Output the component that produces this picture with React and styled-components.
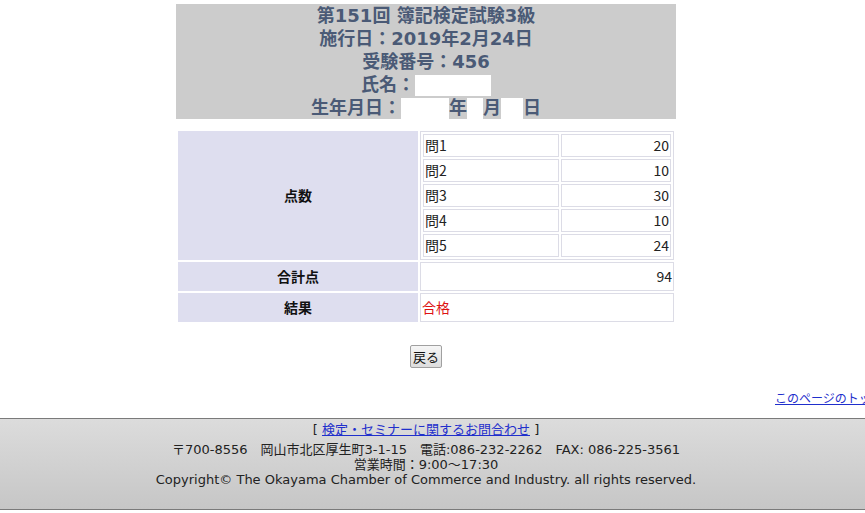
import React from 'react';
import styled, { createGlobalStyle } from 'styled-components';

const GlobalStyle = createGlobalStyle`
  html, body {
    margin: 0;
    padding: 0;
    background: #fff;
    overflow-x: hidden;
  }
  body {
    font-family: "Noto Sans", "Noto Sans CJK JP", sans-serif;
    color: #222;
  }
`;

const scores = [
  { label: '問1', value: 20 },
  { label: '問2', value: 10 },
  { label: '問3', value: 30 },
  { label: '問4', value: 10 },
  { label: '問5', value: 24 },
];

const App = () => {
  const total = scores.reduce((sum, s) => sum + s.value, 0);

  return (
    <>
      <GlobalStyle />
      <Page>
        <Header>
          <HeaderLine>第151回 簿記検定試験3級</HeaderLine>
          <HeaderLine>施行日：2019年2月24日</HeaderLine>
          <HeaderLine>受験番号：456</HeaderLine>
          <HeaderLine>
            氏名：<Blank w={76} />
          </HeaderLine>
          <HeaderLine>
            生年月日：<Blank w={48} />年<Blank w={16} />月<Blank w={22} />日
          </HeaderLine>
        </Header>

        <ResultTable>
          <tbody>
            <tr>
              <LabelCell>点数</LabelCell>
              <ValueCell flush>
                <ScoreTable>
                  <tbody>
                    {scores.map((s) => (
                      <tr key={s.label}>
                        <ScoreCell>{s.label}</ScoreCell>
                        <ScoreCell align="right">{s.value}</ScoreCell>
                      </tr>
                    ))}
                  </tbody>
                </ScoreTable>
              </ValueCell>
            </tr>
            <tr>
              <LabelCell>合計点</LabelCell>
              <ValueCell align="right">{total}</ValueCell>
            </tr>
            <tr>
              <LabelCell>結果</LabelCell>
              <ValueCell>
                <Pass>合格</Pass>
              </ValueCell>
            </tr>
          </tbody>
        </ResultTable>

        <ButtonRow>
          <BackButton type="button">戻る</BackButton>
        </ButtonRow>
      </Page>

      <TopLinkRow>
        <BlueLink href="#top">このページのトップへ</BlueLink>
      </TopLinkRow>

      <Footer>
        <FooterInner>
          <FooterLinkLine>
            [ <BlueLink href="#contact">検定・セミナーに関するお問合わせ</BlueLink> ]
          </FooterLinkLine>
          <FooterLine>〒700-8556　岡山市北区厚生町3-1-15　電話:086-232-2262　FAX: 086-225-3561</FooterLine>
          <FooterLine>営業時間：9:00〜17:30</FooterLine>
          <FooterLine>Copyright© The Okayama Chamber of Commerce and Industry. all rights reserved.</FooterLine>
        </FooterInner>
      </Footer>
    </>
  );
};

export default App;

// Styled Components
const Page = styled.div`
  width: 852px;
  padding-top: 4px;
`;

const Header = styled.div`
  width: 500px;
  margin: 0 auto;
  background: #cccccc;
  text-align: center;
  color: #4a5a76;
  font-family: "DejaVu Sans", "Noto Sans CJK JP", sans-serif;
  font-weight: bold;
  font-size: 18px;
`;

const HeaderLine = styled.div`
  height: 23px;
  line-height: 23px;
  white-space: nowrap;
`;

const Blank = styled.span`
  display: inline-block;
  width: ${(p) => p.w}px;
  height: 21px;
  background: #ffffff;
  vertical-align: middle;
  margin-top: -2px;
`;

const ResultTable = styled.table`
  width: 500px;
  margin: 10px auto 0;
  border-spacing: 2px;
  font-family: "Noto Sans CJK JP", sans-serif;
  font-size: 14px;
`;

const LabelCell = styled.td`
  width: 238px;
  background: #dedeef;
  border: 1px solid #dedeef;
  text-align: center;
  font-weight: bold;
  color: #111;
  padding: 4px 0;
  line-height: 19px;
`;

const ValueCell = styled.td`
  border: 1px solid #dcdce6;
  padding: ${(p) => (p.flush ? '0' : '4px 1px')};
  text-align: ${(p) => p.align || 'left'};
  line-height: 19px;
  color: #222;
`;

const ScoreTable = styled.table`
  width: 100%;
  border-spacing: 2px;
  font-size: 14px;
`;

const ScoreCell = styled.td`
  border: 1px solid #dcdce6;
  padding: 1px;
  height: 19px;
  line-height: 19px;
  text-align: ${(p) => p.align || 'left'};
  width: ${(p) => (p.align === 'right' ? '106px' : 'auto')};
`;

const Pass = styled.span`
  color: #dd1111;
`;

const ButtonRow = styled.div`
  text-align: center;
  margin-top: 21px;
`;

const BackButton = styled.button`
  font-family: "Noto Sans CJK JP", sans-serif;
  font-size: 13px;
  height: 23px;
  padding: 0 2px;
  border: 1px solid #a0a0a0;
  border-radius: 2px;
  background: linear-gradient(#f6f6f6, #dddddd);
  color: #111;
  line-height: 19px;
`;

const TopLinkRow = styled.div`
  margin-top: 22px;
  padding-left: 775px;
  white-space: nowrap;
  font-size: 12px;
  font-family: "Noto Sans CJK JP", sans-serif;
  line-height: 16px;
  height: 16px;
`;

const BlueLink = styled.a`
  color: #1f2fcc;
  text-decoration: underline;
`;

const Footer = styled.div`
  margin-top: 12px;
  border-top: 1px solid #7a7a7a;
  border-bottom: 1px solid #7a7a7a;
  background: linear-gradient(#dcdcdc, #c6c6c6);
  height: 90px;
  font-family: "DejaVu Sans", "Noto Sans CJK JP", sans-serif;
  font-size: 13px;
  color: #222;
`;

const FooterInner = styled.div`
  width: 852px;
  text-align: center;
  padding-top: 3px;
`;

const FooterLinkLine = styled.div`
  line-height: 16px;
  margin-bottom: 4px;
`;

const FooterLine = styled.div`
  line-height: 15px;
  white-space: nowrap;
`;
